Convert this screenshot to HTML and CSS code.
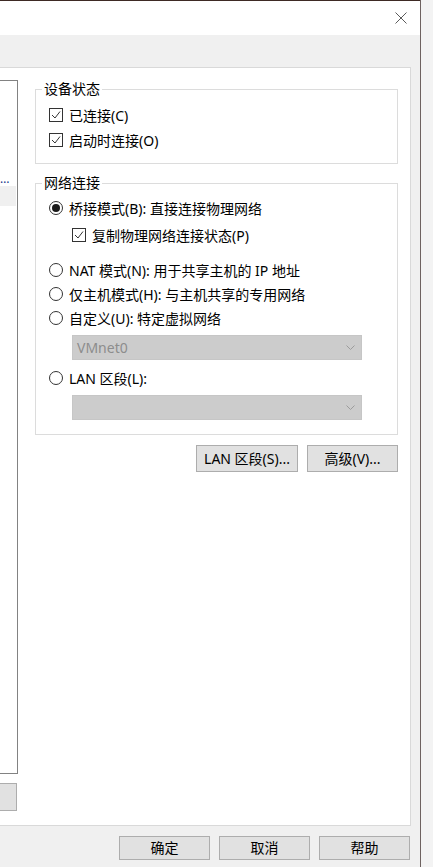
FILE: index.html
```html
<!DOCTYPE html>
<html lang="zh-CN">
<head>
<meta charset="utf-8">
<title>网络适配器</title>
<link rel="stylesheet" href="styles.css">
</head>
<body>
<div class="window">
  <div class="titlebar">
    <svg class="close" width="12" height="12" viewBox="0 0 12 12"><path d="M0.5 0.5 L11.5 11.5 M11.5 0.5 L0.5 11.5" stroke="#5a5a5a" stroke-width="1" fill="none"/></svg>
  </div>
  <div class="client">
    <div class="panel">
      <div class="leftcol">
        <div class="listbox">
          <div class="item trunc">…</div>
          <div class="item selected"></div>
        </div>
        <div class="leftbtn"></div>
      </div>
      <div class="rightcol">
        <fieldset class="group group1">
          <legend>设备状态</legend>
          <div class="row first"><span class="check"><svg width="12" height="12" viewBox="0 0 12 12"><polyline points="2,6 5,9 10,2.5" fill="none" stroke="#333" stroke-width="1"/></svg></span><span>已连接(C)</span></div>
          <div class="row"><span class="check"><svg width="12" height="12" viewBox="0 0 12 12"><polyline points="2,6 5,9 10,2.5" fill="none" stroke="#333" stroke-width="1"/></svg></span><span>启动时连接(O)</span></div>
        </fieldset>
        <fieldset class="group group2">
          <legend>网络连接</legend>
          <div class="row r-bridge"><span class="radio on"></span><span>桥接模式(B): 直接连接物理网络</span></div>
          <div class="row r-copy"><span class="check"><svg width="12" height="12" viewBox="0 0 12 12"><polyline points="2,6 5,9 10,2.5" fill="none" stroke="#333" stroke-width="1"/></svg></span><span>复制物理网络连接状态(P)</span></div>
          <div class="row r-nat"><span class="radio"></span><span>NAT 模式(N): 用于共享主机的 IP 地址</span></div>
          <div class="row"><span class="radio"></span><span>仅主机模式(H): 与主机共享的专用网络</span></div>
          <div class="row"><span class="radio"></span><span>自定义(U): 特定虚拟网络</span></div>
          <div class="select s1"><span class="val">VMnet0</span><svg class="chev" width="9" height="5" viewBox="0 0 9 5"><polyline points="0.5,0.5 4.5,4.5 8.5,0.5" fill="none" stroke="#9c9c9c" stroke-width="1"/></svg></div>
          <div class="row r-lan"><span class="radio"></span><span>LAN 区段(L):</span></div>
          <div class="select s2"><span class="val"></span><svg class="chev" width="9" height="5" viewBox="0 0 9 5"><polyline points="0.5,0.5 4.5,4.5 8.5,0.5" fill="none" stroke="#9c9c9c" stroke-width="1"/></svg></div>
        </fieldset>
        <div class="btnrow">
          <button class="btn lanbtn">LAN 区段(S)...</button>
          <button class="btn advbtn">高级(V)...</button>
        </div>
      </div>
    </div>
    <div class="footer">
      <button class="btn fbtn">确定</button>
      <button class="btn fbtn">取消</button>
      <button class="btn fbtn">帮助</button>
    </div>
  </div>
</div>
</body>
</html>
```

FILE: styles.css
```css
html, body {
  margin: 0;
  padding: 0;
  height: 867px;
  overflow: hidden;
}
body {
  display: flex;
  background: #f3f3f3;
  font-family: "Noto Sans", "Noto Sans CJK SC", sans-serif;
  font-size: 14px;
  color: #000;
}
.window {
  width: 420px;
  height: 867px;
  background: #f0f0f0;
  border-right: 1px solid #6e6260;
  display: flex;
  flex-direction: column;
  flex-shrink: 0;
}
.titlebar {
  height: 34px;
  background: #fff;
  border-top: 1px solid #3e2a24;
  display: flex;
  justify-content: flex-end;
  align-items: flex-start;
}
.close {
  margin-top: 11px;
  margin-right: 13px;
}
.client {
  padding-top: 32px;
  display: flex;
  flex-direction: column;
}
.panel {
  margin-left: -1px;
  width: 410px;
  height: 757px;
  background: #fff;
  border: 1px solid #d9d9d9;
  display: flex;
}
.leftcol {
  width: 18px;
  display: flex;
  flex-direction: column;
}
.listbox {
  box-sizing: border-box;
  margin-top: 12px;
  margin-left: -2px;
  width: 20px;
  height: 694px;
  border: 1px solid #828282;
  border-left: none;
  padding-top: 85px;
  overflow: hidden;
}
.item {
  height: 20px;
  line-height: 20px;
  white-space: nowrap;
}
.trunc {
  color: #1a3a8a;
  font-size: 12px;
  padding-left: 2px;
  line-height: 26px;
}
.selected {
  background: #f0f0f0;
  margin-right: 1px;
}
.leftbtn {
  box-sizing: border-box;
  margin-top: 9px;
  margin-left: -2px;
  width: 19px;
  height: 28px;
  background: #e1e1e1;
  border: 1px solid #adadad;
  border-left: none;
}
.rightcol {
  margin-left: 17px;
  width: 363px;
  display: flex;
  flex-direction: column;
}
.group {
  margin: 0;
  padding: 0 0 0 13px;
  border: 1px solid #dcdcdc;
  min-width: 0;
}
.group legend {
  margin-left: -7px;
  padding: 0 2px;
  line-height: 18px;
  height: 18px;
}
.group1 {
  margin-top: 12px;
  padding-bottom: 11px;
}
.group2 {
  margin-top: 10px;
  padding-bottom: 14px;
}
.row {
  height: 25px;
  display: flex;
  align-items: center;
  white-space: nowrap;
}
.group1 .row.first { margin-top: 4px; }
.group2 .row { height: 24px; }
.r-bridge { margin-top: 4px; }
.r-copy { margin-top: 3px; margin-left: 23px; }
.r-nat { margin-top: 11px; }
.r-lan { margin-top: 6px; }
.check {
  width: 12px;
  height: 12px;
  border: 1px solid #333;
  background: #fff;
  margin-right: 6px;
  display: flex;
  flex-shrink: 0;
}
.radio {
  width: 12px;
  height: 12px;
  border: 1px solid #333;
  border-radius: 50%;
  margin-right: 6px;
  flex-shrink: 0;
  display: flex;
  align-items: center;
  justify-content: center;
  background: #fff;
}
.radio.on::after {
  content: "";
  width: 8px;
  height: 8px;
  border-radius: 50%;
  background: #1a1a1a;
}
.select {
  box-sizing: border-box;
  margin-left: 23px;
  width: 290px;
  height: 25px;
  background: #cccccc;
  border: 1px solid #c6c6c6;
  display: flex;
  align-items: center;
  justify-content: space-between;
  padding: 0 6px 0 4px;
}
.s1 { margin-top: 5px; }
.s2 { margin-top: 5px; }
.val {
  color: #8d8d8d;
}
.btnrow {
  margin-top: 10px;
  display: flex;
  justify-content: flex-end;
  gap: 9px;
}
.btn {
  font-family: "Noto Sans", "Noto Sans CJK SC", sans-serif;
  font-size: 14px;
  color: #000;
  background: #e1e1e1;
  border: 1px solid #adadad;
  border-radius: 0;
  padding: 0;
  margin: 0;
  line-height: 1;
}
.lanbtn { width: 102px; height: 27px; }
.advbtn { width: 91px; height: 27px; }
.footer {
  margin-top: 10px;
  display: flex;
  justify-content: flex-end;
  gap: 9px;
  padding-right: 10px;
}
.fbtn {
  width: 91px;
  height: 24px;
}
```
